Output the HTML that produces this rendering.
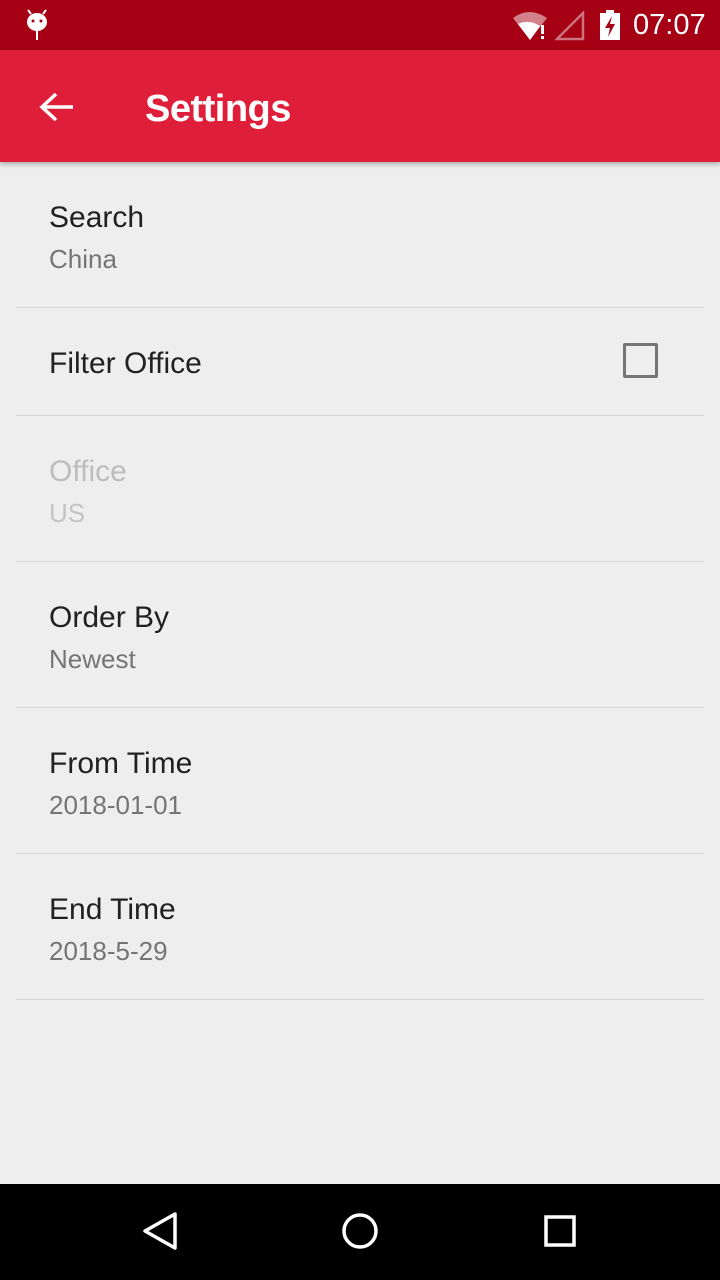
<!DOCTYPE html><html><head><style>
body{margin:0;width:720px;height:1280px;background:#eeeeee;font-family:"Liberation Sans",sans-serif;position:relative;overflow:hidden}
.a{position:absolute;white-space:nowrap}
.t{font-size:30px;line-height:30px;color:#212121;left:49px}
.s{font-size:26px;line-height:26px;color:#757575;left:49px}
.d{position:absolute;left:16px;width:688px;height:1px;background:#d6d6d6}
</style></head><body>
<div class="a" style="left:0;top:0;width:720px;height:50px;background:#a50013"></div>
<div class="a" style="left:0;top:50px;width:720px;height:112px;background:#df1f3a;box-shadow:0 2px 5px rgba(0,0,0,.3)"></div>
<svg class="a" style="left:24px;top:8px" width="26" height="34" viewBox="0 0 26 34"><path d="M4 2l3 4M22 2l-3 4" stroke="#fff" stroke-width="2"/><ellipse cx="13" cy="14" rx="10" ry="9" fill="#fff"/><circle cx="9" cy="13" r="1.5" fill="#a50013"/><circle cx="17" cy="13" r="1.5" fill="#a50013"/><rect x="12" y="22" width="2" height="10" fill="#fff"/></svg>
<svg class="a" style="left:512px;top:10px" width="40" height="30" viewBox="0 0 40 30"><path d="M1 8Q17 -4 35 8L18 30Z" fill="#fff" opacity=".5"/><path d="M6 14L18 30L28 16Q17 9 6 14Z" fill="#fff"/><rect x="29" y="15" width="3" height="9" fill="#fff"/><rect x="29" y="26" width="3" height="3" fill="#fff"/></svg>
<svg class="a" style="left:555px;top:11px" width="30" height="30" viewBox="0 0 30 30"><path d="M28 2V28H2Z" fill="none" stroke="#fff" stroke-opacity=".45" stroke-width="2.5"/></svg>
<svg class="a" style="left:598px;top:9px" width="24" height="32" viewBox="0 0 24 32"><rect x="8" y="1" width="8" height="4" fill="#fff"/><rect x="2" y="4" width="20" height="27" fill="#fff"/><path d="M14 7L7 19H12L10 28L17 15H12Z" fill="#a50013"/></svg>
<div class="a" style="left:633px;top:9px;font-size:29px;line-height:32px;color:#fff">07:07</div>
<svg class="a" style="left:38px;top:90px" width="36" height="34" viewBox="0 0 36 34"><path d="M35 17H5M18 4L4 17L18 30" stroke="#fff" stroke-width="3.5" fill="none"/></svg>
<div class="a" style="left:145px;top:89px;font-size:38px;line-height:40px;color:#fff;font-weight:bold;letter-spacing:-0.5px">Settings</div>

<div class="a t" style="top:203px">Search</div><div class="a s" style="top:246px">China</div>
<div class="d" style="top:307px"></div>
<div class="a t" style="top:349px">Filter Office</div>
<div class="a" style="left:623px;top:343px;width:29px;height:29px;border:3px solid #757575;border-radius:2px"></div>
<div class="d" style="top:415px"></div>
<div class="a t" style="top:457px;color:#bdbdbd">Office</div><div class="a s" style="top:500px;color:#c4c4c4">US</div>
<div class="d" style="top:561px"></div>
<div class="a t" style="top:603px">Order By</div><div class="a s" style="top:646px">Newest</div>
<div class="d" style="top:707px"></div>
<div class="a t" style="top:749px">From Time</div><div class="a s" style="top:792px">2018-01-01</div>
<div class="d" style="top:853px"></div>
<div class="a t" style="top:895px">End Time</div><div class="a s" style="top:938px">2018-5-29</div>
<div class="d" style="top:999px"></div>

<div class="a" style="left:0;top:1184px;width:720px;height:96px;background:#000"></div>
<svg class="a" style="left:0;top:1184px" width="720" height="96" viewBox="0 0 720 96"><path d="M175 30L145 47L175 64Z" fill="none" stroke="#fff" stroke-width="3.5" stroke-linejoin="round"/><circle cx="360" cy="47" r="16" fill="none" stroke="#fff" stroke-width="3.5"/><rect x="546" y="33" width="28" height="28" fill="none" stroke="#fff" stroke-width="3.5"/></svg>
</body></html>
